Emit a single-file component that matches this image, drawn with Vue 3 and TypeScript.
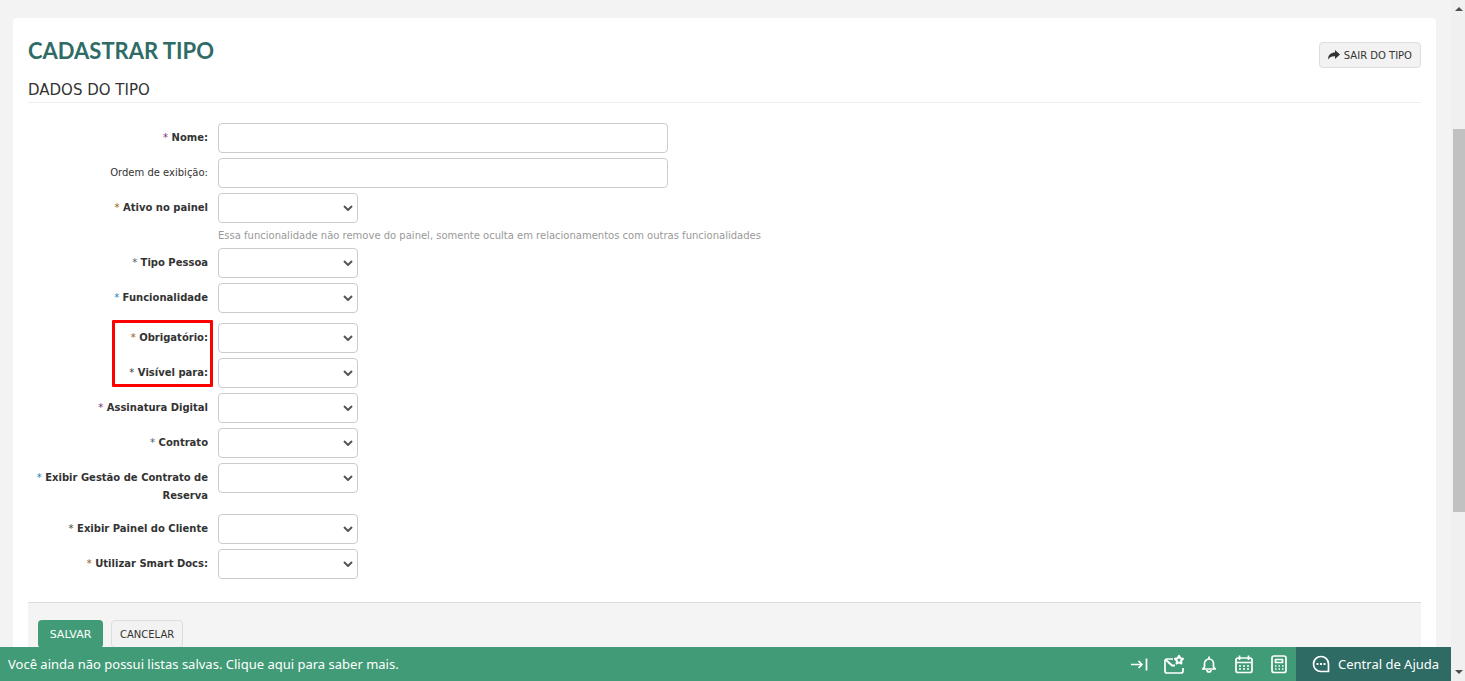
<script setup lang="ts">
import { reactive } from 'vue'

interface Field {
  id: string
  label: string
  kind: 'text' | 'select'
  star?: string
  hint?: string
}

const groups: { name: string; marked?: boolean; fields: Field[] }[] = [
  {
    name: 'geral',
    fields: [
      { id: 'nome', label: 'Nome:', kind: 'text', star: 'purple' },
      { id: 'ordem', label: 'Ordem de exibição:', kind: 'text' },
      {
        id: 'ativo',
        label: 'Ativo no painel',
        kind: 'select',
        star: 'brown',
        hint: 'Essa funcionalidade não remove do painel, somente oculta em relacionamentos com outras funcionalidades',
      },
      { id: 'pessoa', label: 'Tipo Pessoa', kind: 'select', star: 'slate' },
      { id: 'funcionalidade', label: 'Funcionalidade', kind: 'select', star: 'blue' },
    ],
  },
  {
    name: 'acesso',
    marked: true,
    fields: [
      { id: 'obrigatorio', label: 'Obrigatório:', kind: 'select', star: 'brown' },
      { id: 'visivel', label: 'Visível para:', kind: 'select', star: 'dark' },
    ],
  },
  {
    name: 'contrato',
    fields: [
      { id: 'assinatura', label: 'Assinatura Digital', kind: 'select', star: 'purple' },
      { id: 'contrato', label: 'Contrato', kind: 'select', star: 'slate' },
      { id: 'gestao', label: 'Exibir Gestão de Contrato de Reserva', kind: 'select', star: 'blue' },
      { id: 'cliente', label: 'Exibir Painel do Cliente', kind: 'select', star: 'dark' },
      { id: 'docs', label: 'Utilizar Smart Docs:', kind: 'select', star: 'brown' },
    ],
  },
]

const values = reactive<Record<string, string>>({})
</script>

<template>
  <div class="shell">
    <div class="view">
      <main class="card">
        <header class="head">
          <h1>CADASTRAR TIPO</h1>
          <button type="button" class="btn exit">
            <svg width="12" height="10" viewBox="0 0 12 10" aria-hidden="true">
              <path d="M7 0l5 4.400L7 9V6.300C3.800 6.100 1.800 6.800.3 9.500-.3 5.500 2.500 2.500 7 2.500z" fill="#333" />
            </svg>
            SAIR DO TIPO
          </button>
        </header>
        <h2>DADOS DO TIPO</h2>
        <form @submit.prevent>
          <div class="fields">
            <div v-for="g in groups" :key="g.name" class="group" :class="{ marked: g.marked }">
              <div v-for="f in g.fields" :key="f.id" class="row">
                <label :for="f.id" :class="{ required: f.star }"><span v-if="f.star" class="star" :class="f.star">*</span> {{ f.label }}</label>
                <div class="control">
                  <input v-if="f.kind === 'text'" :id="f.id" v-model="values[f.id]" type="text" />
                  <div v-else class="pick">
                    <select :id="f.id" v-model="values[f.id]">
                      <option value=""></option>
                      <option value="s">Sim</option>
                      <option value="n">Não</option>
                    </select>
                    <svg width="10" height="6" viewBox="0 0 10 6" aria-hidden="true">
                      <path d="M1 1l4 4 4-4" fill="none" stroke="#555" stroke-width="2" />
                    </svg>
                  </div>
                  <p v-if="f.hint" class="hint">{{ f.hint }}</p>
                </div>
              </div>
            </div>
          </div>
          <div class="actions">
            <button type="submit" class="btn save">SALVAR</button>
            <button type="button" class="btn">CANCELAR</button>
          </div>
        </form>
      </main>
      <footer class="bar">
        <a href="#" class="message">Você ainda não possui listas salvas. Clique aqui para saber mais.</a>
        <nav class="tools">
          <button type="button" aria-label="Recolher">
            <svg width="20" height="20" viewBox="0 0 20 20">
              <path d="M2 10.500h11M9.500 7l3.500 3.500L9.500 14M17.500 4.500v12" />
            </svg>
          </button>
          <button type="button" aria-label="Mensagens">
            <svg width="22" height="20" viewBox="0 0 22 20">
              <path d="M10 5H4a2 2 0 0 0-2 2v10a2 2 0 0 0 2 2h14a2 2 0 0 0 2-2v-3" />
              <path d="M3 6l6 5.500 3 0" stroke-width="2" />
              <path d="M16 1.800l1.300 2.500 2.700.5-1.900 2 .3 2.700-2.400-1.100-2.400 1.100.3-2.700-1.900-2 2.700-.5z" stroke-width="2" />
            </svg>
          </button>
          <button type="button" aria-label="Notificações">
            <svg width="20" height="20" viewBox="0 0 20 20">
              <path d="M10 2.500v2M5.500 13V9.500a4.500 4.500 0 0 1 9 0V13l1.800 2H3.700zM8 16a2 2 0 0 0 4 0" />
            </svg>
          </button>
          <button type="button" aria-label="Calendário">
            <svg width="20" height="20" viewBox="0 0 20 20">
              <rect x="2" y="4" width="16" height="14.500" rx="2" />
              <path d="M2 8.500h16M5.500 1.500V6M14.500 1.500V6" />
              <path d="M5 12h10M5 15h10" stroke-dasharray="2 2" />
            </svg>
          </button>
          <button type="button" aria-label="Calculadora">
            <svg width="20" height="20" viewBox="0 0 20 20">
              <rect x="3" y="2" width="14" height="16.500" rx="2" />
              <rect x="6.500" y="5.500" width="7" height="3" />
              <path d="M6 12h8.500M6 15h8.500" stroke-dasharray="1.500 2" />
            </svg>
          </button>
        </nav>
        <button type="button" class="help">
          <svg width="18" height="18" viewBox="0 0 18 18" aria-hidden="true">
            <path d="M9 1.500a7.500 7.500 0 0 0 0 15h7.500V9A7.500 7.500 0 0 0 9 1.500z" />
            <path d="M4.500 9h2M8 9h2M11.500 9h2" stroke-width="2" />
          </svg>
          Central de Ajuda
        </button>
      </footer>
    </div>
    <div class="track" aria-hidden="true">
      <svg width="8" height="4" viewBox="0 0 8 4"><path d="M4 0l4 4H0z" fill="#505050" /></svg>
      <div class="rail"><div class="thumb"></div></div>
      <svg width="8" height="4" viewBox="0 0 8 4"><path d="M0 0h8L4 4z" fill="#505050" /></svg>
    </div>
  </div>
</template>

<style>
body {
  margin: 0;
  background: #f3f3f3;
}
</style>

<style scoped>
.shell {
  display: flex;
  height: 100vh;
  overflow: hidden;
  font-family: 'DejaVu Sans', sans-serif;
  font-size: 10px;
  color: #333;
}
.shell *,
.marked::after {
  box-sizing: border-box;
}
.view {
  flex: 1;
  min-width: 0;
  display: flex;
  flex-direction: column;
}
.card {
  flex: 1;
  min-height: 0;
  overflow: hidden;
  margin: 18px 15px 0 13px;
  padding: 0 15px;
  background: #fff;
  border-radius: 4px 4px 0 0;
}
.head {
  display: flex;
  justify-content: space-between;
  align-items: flex-start;
  padding-top: 18px;
}
h1 {
  margin: 0;
  font: 700 22px/30px Lato, sans-serif;
  color: #2f6c66;
}
h2 {
  margin: 11px 0 0;
  padding-bottom: 1px;
  border-bottom: 1px solid #eee;
  font-size: 15px;
  font-weight: 400;
  line-height: 22px;
}
button {
  font: inherit;
  color: inherit;
  cursor: pointer;
}
.btn {
  height: 26px;
  padding: 0 8px;
  border: 1px solid #ddd;
  border-radius: 4px;
  background: #f2f2f2;
}
.exit {
  display: flex;
  align-items: center;
  gap: 4px;
  margin-top: 6px;
}
.fields {
  display: flex;
  flex-direction: column;
  gap: 5px;
  padding: 20px 0 23px;
}
.group {
  display: flex;
  flex-direction: column;
  gap: 5px;
}
.marked {
  position: relative;
  margin-top: 5px;
}
.marked::after {
  content: '';
  position: absolute;
  top: -3px;
  left: 84px;
  width: 101px;
  height: 67px;
  border: 3px solid #f00;
  border-radius: 1px;
  pointer-events: none;
}
.row {
  display: grid;
  grid-template-columns: 180px 1fr;
  column-gap: 10px;
}
label {
  padding: 6px 0 4px;
  line-height: 18px;
  text-align: right;
}
.required {
  font-weight: 700;
}
.star {
  font-weight: 400;
}
.purple {
  color: #7b2f7d;
}
.brown {
  color: #9a5a10;
}
.slate {
  color: #47606f;
}
.blue {
  color: #2080c0;
}
.dark {
  color: #444;
}
input,
select {
  display: block;
  width: 100%;
  height: 30px;
  padding: 0 8px;
  border: 1px solid #ccc;
  border-radius: 4px;
  background: #fff;
  font: inherit;
  color: inherit;
}
input {
  max-width: 450px;
}
.pick {
  position: relative;
  width: 140px;
}
select {
  appearance: none;
}
.pick svg {
  position: absolute;
  right: 5px;
  top: 12px;
  pointer-events: none;
}
.hint {
  margin: 0;
  padding-top: 5px;
  line-height: 15px;
  color: #999;
}
.actions {
  display: flex;
  align-items: flex-start;
  gap: 8px;
  height: 64px;
  padding: 17px 10px;
  border-top: 1px solid #ddd;
  background: #f4f4f4;
}
.actions .btn {
  height: 28px;
}
.actions .save {
  width: 65px;
  padding: 0;
  border: 0;
  background: #419b76;
  color: #fff;
  font-size: 11px;
}
.bar {
  flex: none;
  display: flex;
  height: 34px;
  background: #419b76;
  color: #fff;
  font: 400 13px/34px 'Noto Sans', sans-serif;
}
.message {
  flex: 1;
  padding-left: 8px;
  color: #fff;
  text-decoration: none;
}
.tools {
  display: flex;
}
.bar button {
  display: flex;
  align-items: center;
  justify-content: center;
  border: 0;
  background: none;
}
.tools button {
  width: 35px;
  padding: 0;
}
.bar svg {
  fill: none;
  stroke: #fff;
  stroke-width: 1.7px;
  stroke-linejoin: round;
}
.bar .help {
  justify-content: flex-start;
  gap: 8px;
  width: 155px;
  padding: 0 0 0 16px;
  background: #2d6b64;
}
.track {
  flex: none;
  display: flex;
  flex-direction: column;
  align-items: flex-end;
  width: 14px;
  padding: 7px 0;
  background: #f0f0f0;
}
.track > svg {
  margin-right: 2px;
}
.rail {
  flex: 1;
  width: 12px;
  padding: 118px 0 158px;
}
.thumb {
  height: 100%;
  background: #c1c1c1;
}
</style>
